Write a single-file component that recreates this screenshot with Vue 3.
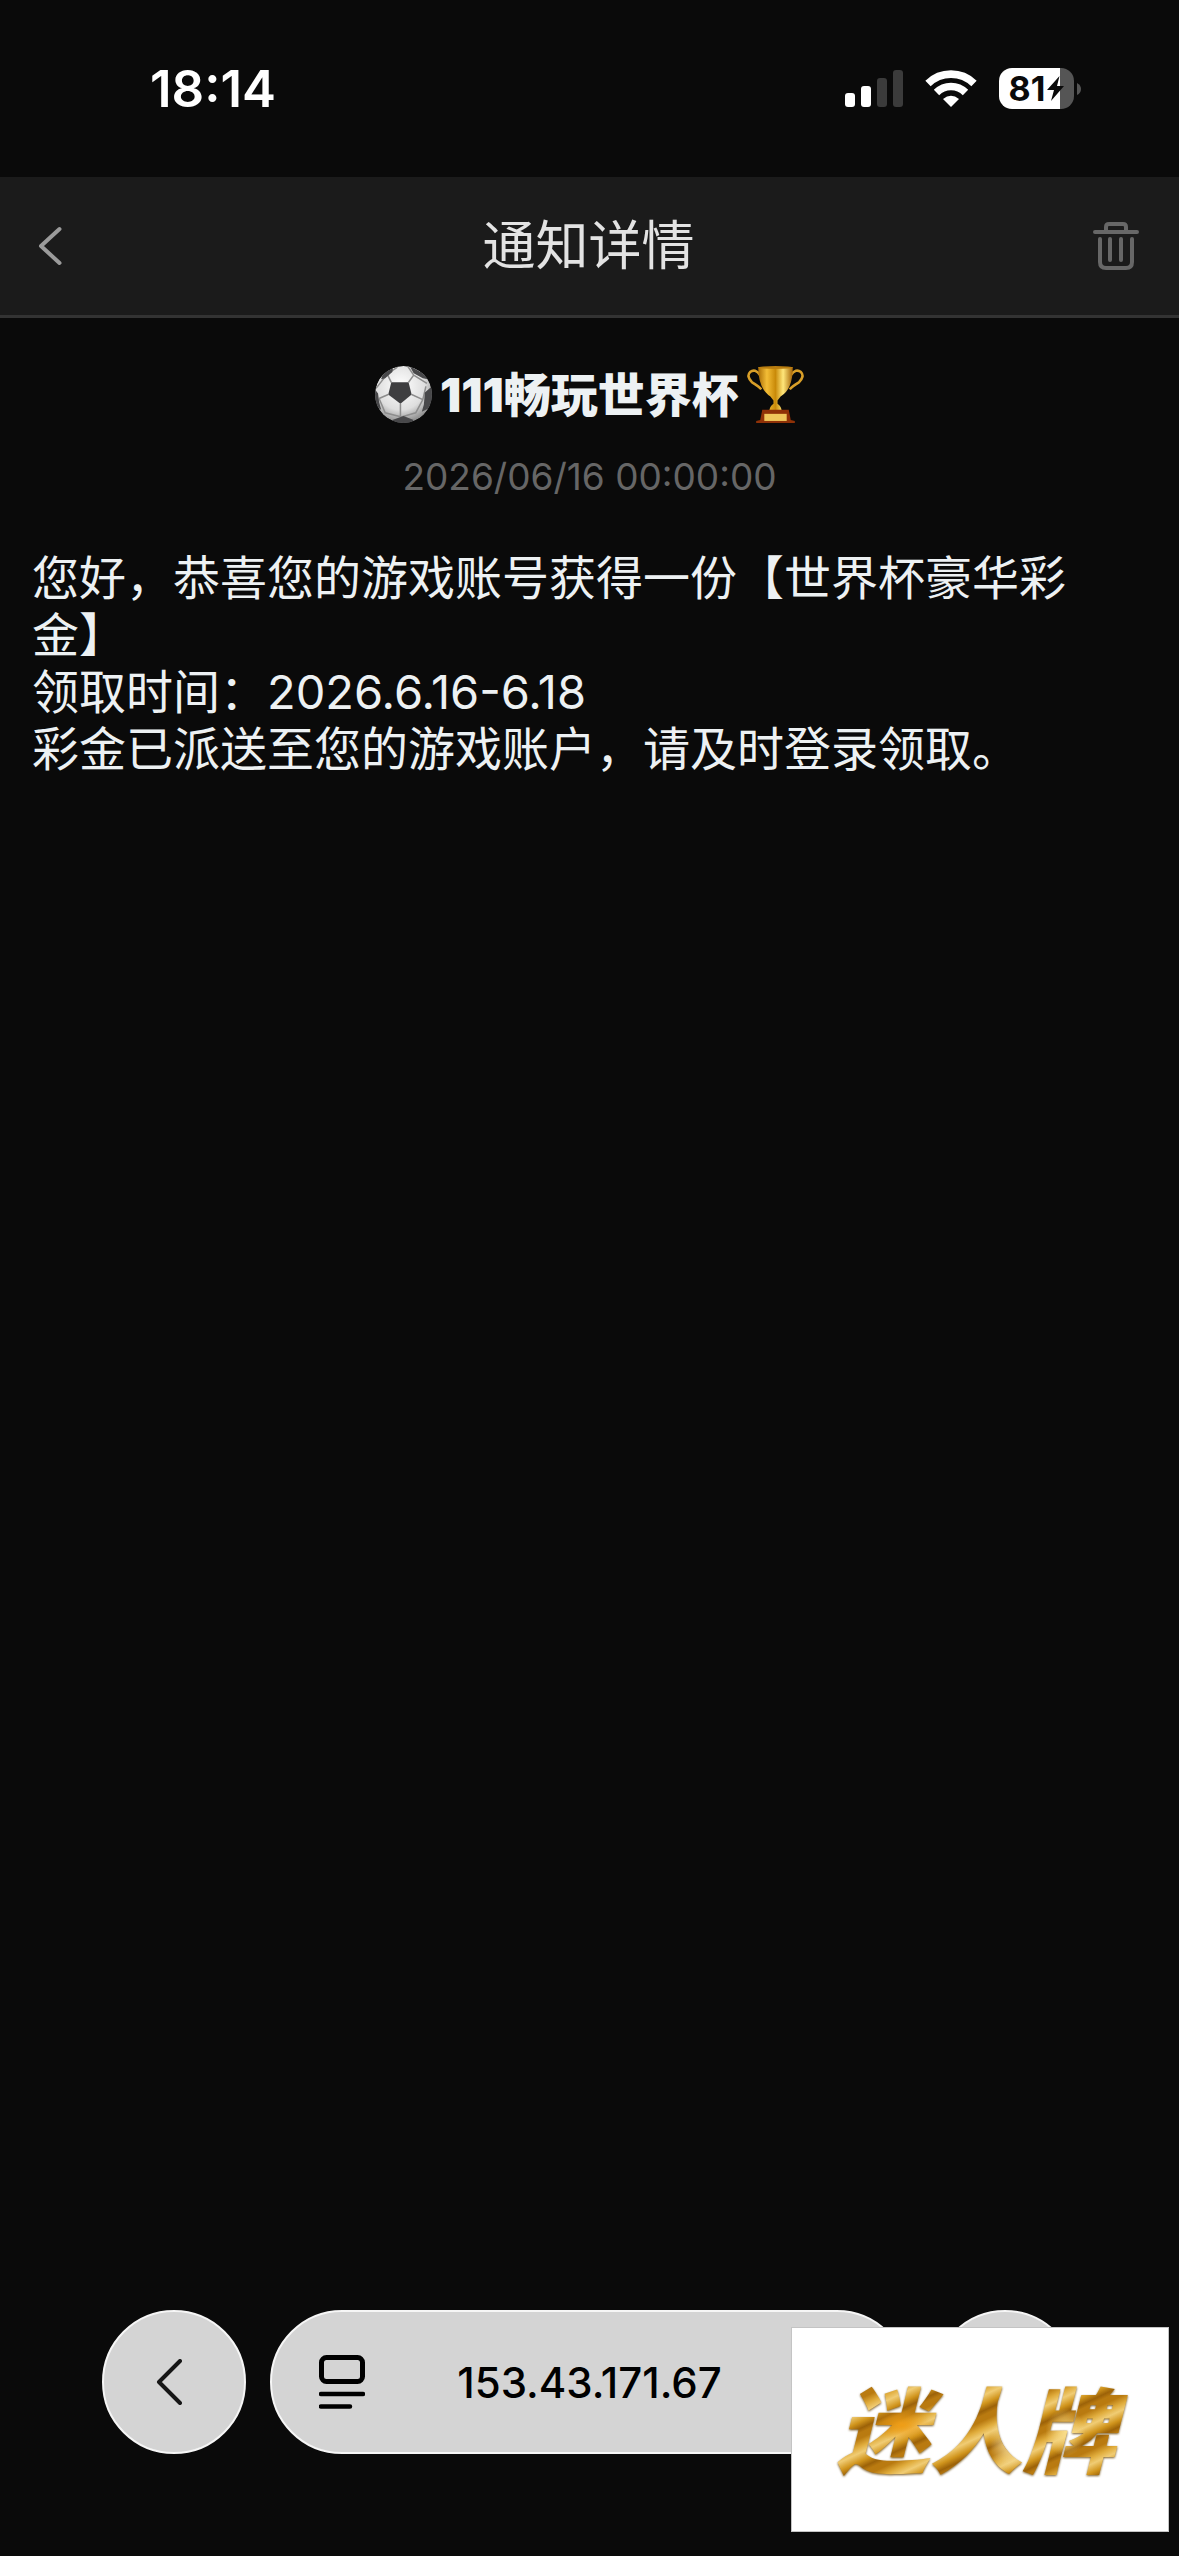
<script setup>
const lines = [
  '您好，恭喜您的游戏账号获得一份【世界杯豪华彩金】',
  '领取时间：2026.6.16-6.18',
  '彩金已派送至您的游戏账户，请及时登录领取。',
]
</script>

<template>
  <div class="page">
    <div class="status">
      <time class="clock">18:14</time>
      <div class="indicators">
        <svg class="signal" viewBox="0 0 58 37" aria-label="信号">
          <rect x="0" y="23" width="10" height="14" rx="3" fill="#fff" />
          <rect x="16" y="16" width="10" height="21" rx="3" fill="#fff" />
          <rect x="32" y="8" width="10" height="29" rx="3" fill="#3b3b3b" />
          <rect x="48" y="0" width="10" height="37" rx="3" fill="#3b3b3b" />
        </svg>
        <svg class="wifi" viewBox="0 0 52 37" aria-label="Wi-Fi">
          <g fill="none" stroke="#fff" stroke-width="7.6">
            <path d="M3 13.5A33 33 0 0 1 49 13.5" />
            <path d="M11.500 22.500A20.500 20.500 0 0 1 40.500 22.500" />
          </g>
          <path d="M26 37l-8-8q8-6.500 16 0z" fill="#fff" />
        </svg>
        <div class="battery">
          <div class="cell">
            <span>81</span>
            <svg class="bolt" viewBox="0 0 17 25"><path d="M12.500 0L0 14h7L4 25L17 10h-7z" fill="#0a0a0a" /></svg>
          </div>
          <svg class="nub" viewBox="0 0 4 12"><path d="M0 0q4 2 4 6t-4 6z" fill="#555" /></svg>
        </div>
      </div>
    </div>

    <header class="header">
      <button class="icon-button" aria-label="返回">
        <svg class="back" viewBox="0 0 24 40" fill="none" stroke="#9b9b9b" stroke-width="4" stroke-linecap="round" stroke-linejoin="round">
          <path d="M21.500 3L3 20l18.500 17" />
        </svg>
      </button>
      <h1>通知详情</h1>
      <button class="icon-button end" aria-label="删除">
        <svg class="trash" viewBox="0 0 46 48" fill="none" stroke="#676767" stroke-width="4" stroke-linecap="round" stroke-linejoin="round">
          <path d="M2 10h42M13 9V5q0-3 3-3h14q3 0 3 3v4M7 17v23q0 6 6 6h20q6 0 6-6V17M17 17v21M28 17v21" />
        </svg>
      </button>
    </header>

    <main>
      <h2>
        <svg class="emoji" viewBox="0 0 56 56" aria-label="足球">
          <defs>
            <radialGradient id="ball" cx="45%" cy="35%" r="65%">
              <stop offset="0" stop-color="#fff" />
              <stop offset=".65" stop-color="#dedede" />
              <stop offset="1" stop-color="#8c8c8c" />
            </radialGradient>
            <clipPath id="round"><circle cx="28" cy="28" r="28" /></clipPath>
          </defs>
          <g clip-path="url(#round)">
            <circle cx="28" cy="28" r="28" fill="url(#ball)" />
            <path d="M16 16L12 8M33 16L38 9M36 28L47 33M25 37V50M13 28L4 32M12 8L1 22M38 9L51 17M47 33L50 20M47 33L40 46L26 50L10 46L4 32M12 8L22 1M38 9L32 0" fill="none" stroke="#8d8d8d" stroke-width="1.500" />
            <path d="M16 16L33 16L36 28L25 37L13 28z" fill="#3e3e40" />
            <path d="M34 0l15 8 3 5-5-1-9-5zM8 7l10-6-1 5-7 6-4 1zM56 20l-7 6-1 12-2 7 10-5zM0 23l3 4 1 8 2 8-6-4zM17 53l11-4 10 4-3 4H20z" fill="#48484a" />
          </g>
        </svg>
        <span>111畅玩世界杯</span>
        <svg class="emoji" viewBox="0 0 56 56" aria-label="奖杯">
          <defs>
            <linearGradient id="cup">
              <stop offset="0" stop-color="#a96c05" />
              <stop offset=".25" stop-color="#f3bd36" />
              <stop offset=".5" stop-color="#c98a09" />
              <stop offset=".72" stop-color="#ffe67a" />
              <stop offset="1" stop-color="#a46204" />
            </linearGradient>
          </defs>
          <g fill="none" stroke="#d99f28" stroke-width="2.500">
            <path d="M13 9Q8 2 3 6Q-1 10 5 16Q12 20 14 23M43 9Q48 2 53 6Q57 10 51 16Q44 20 42 23" />
          </g>
          <path d="M11 1h34q0 22-12 29l-3 4v3q4 3 4 7H22q0-4 4-7v-3l-3-4Q11 22 11 1z" fill="url(#cup)" />
          <ellipse cx="28" cy="1.500" rx="17" ry="1.500" fill="#b97d10" />
          <path d="M15 43h26l2 10 4 1v2H9v-2l4-1z" fill="#8f3107" />
          <path d="M17 47h22v7H17z" fill="#efc65b" />
        </svg>
      </h2>
      <time class="date">2026/06/16 00:00:00</time>
      <div class="message">
        <p v-for="line in lines" :key="line">{{ line }}</p>
      </div>
    </main>

    <nav class="toolbar">
      <button class="glass circle" aria-label="后退">
        <svg class="previous" viewBox="0 0 26 46" fill="none" stroke="#161616" stroke-width="4" stroke-linecap="round" stroke-linejoin="round">
          <path d="M24 2L3 23l21 21" />
        </svg>
      </button>
      <button class="glass address">
        <svg class="reader" viewBox="0 0 46 54" fill="none" stroke="#000" stroke-linecap="round">
          <rect x="2.500" y="2.500" width="41" height="24" rx="5" stroke-width="5" />
          <path d="M2 39h42M2 51.500h29" stroke-width="4.500" />
        </svg>
        <span>153.43.171.67</span>
      </button>
      <button class="glass circle" aria-label="更多"></button>
    </nav>

    <aside class="brand"><strong>迷人牌</strong></aside>
  </div>
</template>

<style>
body {
  margin: 0;
  background: #0a0a0a;
}
</style>

<style scoped>
.page {
  display: flex;
  flex-direction: column;
  min-height: 100vh;
  background: #0a0a0a;
  color: #edf1f3;
  font-family: Inter, "Noto Sans CJK SC", sans-serif;
}
svg {
  display: block;
  flex: none;
}
button {
  border: 0;
  padding: 0;
  background: none;
  color: inherit;
  font: inherit;
}
h1, h2, p {
  margin: 0;
}
.status {
  display: flex;
  align-items: center;
  justify-content: space-between;
  box-sizing: border-box;
  height: 177px;
  padding: 0 98px 0 150px;
}
.clock {
  color: #fff;
  font-size: 51px;
  font-weight: 600;
}
.indicators {
  display: flex;
  align-items: center;
  gap: 22px;
}
.signal { width: 58px; height: 37px; }
.wifi { width: 52px; height: 37px; }
.battery {
  display: flex;
  align-items: center;
  gap: 3px;
}
.cell {
  display: flex;
  align-items: center;
  justify-content: center;
  gap: 2px;
  width: 75px;
  height: 41px;
  border-radius: 13px;
  background: linear-gradient(90deg, #fff 61px, #555 61px);
  color: #0a0a0a;
  font-size: 34px;
  font-weight: 700;
}
.bolt { width: 17px; height: 25px; }
.nub { width: 4px; height: 12px; }
.header {
  display: flex;
  align-items: center;
  justify-content: space-between;
  box-sizing: border-box;
  height: 141px;
  padding: 0 40px 0 38px;
  border-bottom: 3px solid #333;
  background: #1b1b1b;
}
.icon-button {
  display: flex;
  width: 80px;
}
.end { justify-content: flex-end; }
.back { width: 24px; height: 40px; }
.trash { width: 46px; height: 48px; }
h1 {
  color: #e3e3e3;
  font-size: 53px;
  font-weight: 400;
  line-height: 80px;
}
main {
  display: flex;
  flex: 1;
  flex-direction: column;
  padding: 48px 32px;
}
h2 {
  display: flex;
  align-items: center;
  justify-content: center;
  gap: 8px;
  font-size: 47px;
  font-weight: 900;
  line-height: 57px;
}
.emoji { width: 57px; height: 57px; }
.date {
  margin-top: 30px;
  color: #666;
  font-size: 37px;
  line-height: 48px;
  text-align: center;
}
.message {
  margin-top: 48px;
  padding-right: 32px;
  font-size: 47px;
  line-height: 57px;
}
.toolbar {
  display: flex;
  gap: 24px;
  padding: 0 102px 102px;
}
.glass {
  display: flex;
  align-items: center;
  box-sizing: border-box;
  height: 144px;
  border: 2px solid #f6f6f6;
  border-radius: 72px;
  background: #d4d4d4;
  color: #000;
}
.circle {
  flex: none;
  justify-content: center;
  width: 144px;
}
.previous { width: 26px; height: 46px; margin-right: 10px; }
.address {
  flex: 1;
  padding: 0 47px;
  font-size: 42px;
  font-weight: 500;
}
.address span {
  flex: 1;
  padding-right: 46px;
}
.reader { width: 46px; height: 54px; }
.brand {
  position: fixed;
  right: 10px;
  bottom: 24px;
  display: flex;
  align-items: center;
  justify-content: center;
  box-sizing: border-box;
  width: 378px;
  height: 205px;
  border: 1px solid #c4c4c4;
  background: #fff;
}
.brand strong {
  padding: 4px 16px 0 8px;
  background:
    radial-gradient(ellipse 30px 16px at 24% 46%, #ef9d16, transparent),
    radial-gradient(ellipse 22px 30px at 60% 60%, #f8e2a2, transparent),
    radial-gradient(ellipse 20px 24px at 78% 52%, #f8dc8a, transparent),
    repeating-linear-gradient(155deg, #b97a10 0 5px, #e0ac3c 12px, #f0cc74 18px, #d0941c 26px, #9c6208 32px, #b97a10 36px);
  background-clip: text;
  color: transparent;
  filter: drop-shadow(0 1px 1px #7a5a20);
  font-size: 93px;
  font-style: italic;
  font-weight: 900;
  line-height: 120px;
}
</style>
